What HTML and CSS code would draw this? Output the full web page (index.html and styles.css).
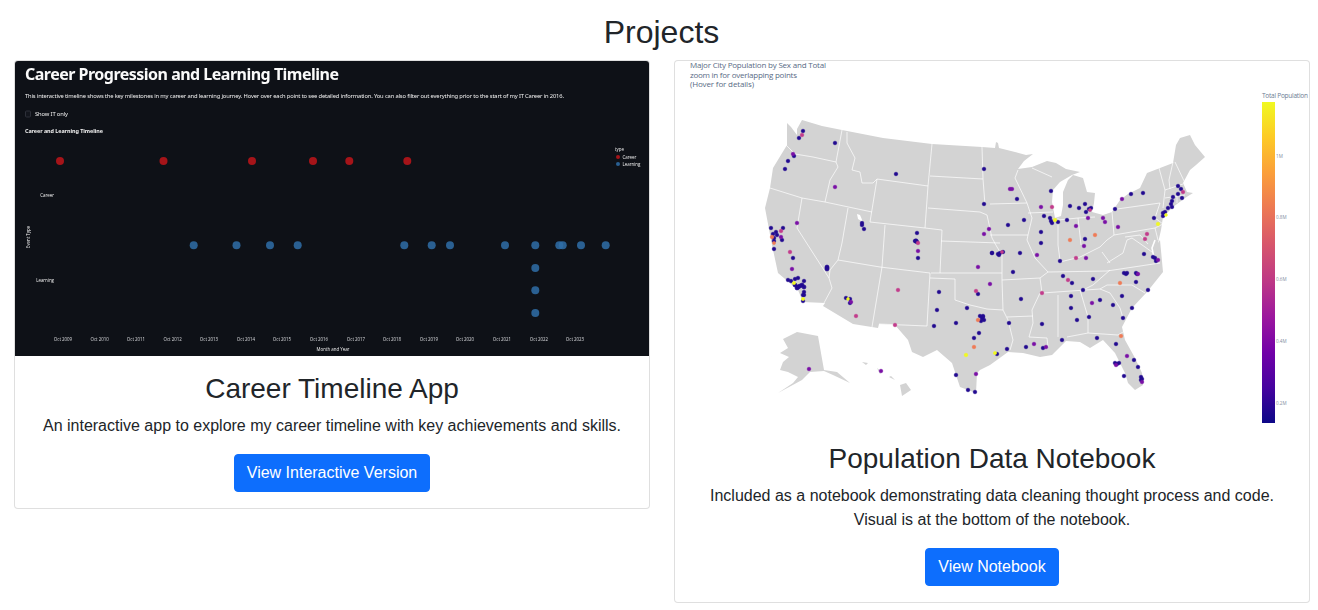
FILE: index.html
```html
<!DOCTYPE html>
<html lang="en">
<head>
    <meta charset="UTF-8">
    <meta name="viewport" content="width=device-width, initial-scale=1.0">
    <title>Projects</title>
    <link rel="stylesheet" href="styles.css">
</head>
<body>
<h1 class="page-title">Projects</h1>
<div class="project-grid">
    <div class="card">
        <svg class="card-img" width="634" height="295" viewBox="15 61 634 295" role="img" aria-label="Career timeline chart">
            <rect class="dark-bg" x="15" y="61" width="634" height="295"/>
            <g class="soft">
                <text class="st-title" x="25" y="79.5" textLength="314">Career Progression and Learning Timeline</text>
                <text class="st-text" x="25" y="97.5" textLength="539">This interactive timeline shows the key milestones in my career and learning journey. Hover over each point to see detailed information. You can also filter out everything prior to the start of my IT Career in 2016.</text>
                <rect class="st-check" x="25.5" y="111" width="5" height="6" rx="1"/>
                <text class="st-text" x="35" y="116" textLength="33">Show IT only</text>
                <text class="st-bold" x="25" y="133" textLength="78">Career and Learning Timeline</text>

                <text class="axis" x="54" y="196.5" text-anchor="end">Career</text>
                <text class="axis" x="54" y="281.5" text-anchor="end">Learning</text>
                <text class="axis" transform="translate(30 237) rotate(-90)" text-anchor="middle">Event Type</text>
                <text class="axis" x="333" y="351" text-anchor="middle">Month and Year</text>

                <g class="ticks">
                    <text x="63" y="340.5">Oct 2009</text>
                    <text x="99.7" y="340.5">Oct 2010</text>
                    <text x="136" y="340.5">Oct 2011</text>
                    <text x="172.7" y="340.5">Oct 2012</text>
                    <text x="209" y="340.5">Oct 2013</text>
                    <text x="246" y="340.5">Oct 2014</text>
                    <text x="282" y="340.5">Oct 2015</text>
                    <text x="319" y="340.5">Oct 2016</text>
                    <text x="356" y="340.5">Oct 2017</text>
                    <text x="392" y="340.5">Oct 2018</text>
                    <text x="429" y="340.5">Oct 2019</text>
                    <text x="465" y="340.5">Oct 2020</text>
                    <text x="502" y="340.5">Oct 2021</text>
                    <text x="539" y="340.5">Oct 2022</text>
                    <text x="575" y="340.5">Oct 2023</text>
                </g>

                <g class="pt-career">
                    <circle cx="60" cy="161" r="4"/><circle cx="163.5" cy="161" r="4"/><circle cx="252" cy="161" r="4"/>
                    <circle cx="313" cy="161" r="4"/><circle cx="349.3" cy="161" r="4"/><circle cx="407.3" cy="161" r="4"/>
                    <circle cx="618" cy="157" r="2"/>
                </g>
                <g class="pt-learning">
                    <circle cx="193.7" cy="245.3" r="4"/><circle cx="236.5" cy="245.3" r="4"/><circle cx="270" cy="245.3" r="4"/>
                    <circle cx="297.7" cy="245.3" r="4"/><circle cx="404.3" cy="245.3" r="4"/><circle cx="431.7" cy="245.3" r="4"/>
                    <circle cx="450" cy="245.3" r="4"/><circle cx="505" cy="245.3" r="4"/><circle cx="535.3" cy="245.3" r="4"/>
                    <circle cx="559.3" cy="245.3" r="4"/><circle cx="562.7" cy="245.3" r="4"/><circle cx="581" cy="245.3" r="4"/>
                    <circle cx="605.7" cy="245.3" r="4"/><circle cx="535.3" cy="268" r="4"/><circle cx="535.3" cy="290.3" r="4"/>
                    <circle cx="535.3" cy="313" r="4"/><circle cx="618" cy="164" r="2"/>
                </g>
                <text class="axis" x="615" y="151">type</text>
                <text class="axis" x="622.5" y="158.7">Career</text>
                <text class="axis" x="622.5" y="165.7">Learning</text>
            </g>
        </svg>
        <div class="card-body">
            <h2 class="card-title">Career Timeline App</h2>
            <p class="card-text">An interactive app to explore my career timeline with key achievements and skills.</p>
            <a class="btn" href="#">View Interactive Version</a>
        </div>
    </div>

    <div class="card">
        <svg class="card-img" width="634" height="365" viewBox="675 61 634 365" role="img" aria-label="Map of US city populations">
            <defs>
                <linearGradient id="plasma" x1="0" y1="1" x2="0" y2="0">
                    <stop offset="0" stop-color="#0d0887"/>
                    <stop offset="0.11" stop-color="#46039f"/>
                    <stop offset="0.22" stop-color="#7201a8"/>
                    <stop offset="0.33" stop-color="#9c179e"/>
                    <stop offset="0.44" stop-color="#bd3786"/>
                    <stop offset="0.56" stop-color="#d8576b"/>
                    <stop offset="0.67" stop-color="#ed7953"/>
                    <stop offset="0.78" stop-color="#fb9f3a"/>
                    <stop offset="0.89" stop-color="#fdca26"/>
                    <stop offset="1" stop-color="#f0f921"/>
                </linearGradient>
            </defs>

            <g class="map-title">
                <text x="690" y="68" textLength="136">Major City Population by Sex and Total</text>
                <text x="690" y="77.5" textLength="107">zoom in for overlapping points</text>
                <text x="690" y="86.5" textLength="64">(Hover for details)</text>
            </g>

            <g class="soft">
            <!-- land -->
            <path class="land" d="M787 123 L791 127 L797 135 L797 129 L802 120 L822 126 L842 130 L883 138 L932 144 L982 147 L995 148 L996 142 L998 143 L999 148 L1015 152 L1026 155 L1033 154 L1024 161 L1018 169 L1032 167 L1047 161 L1056 163 L1066 169 L1080 172 L1072 175 L1060 182 L1053 190 L1052 202 L1055 218 L1061 216 L1063 205 L1063 192 L1068 180 L1073 175 L1083 178 L1087 192 L1095 193 L1094 203 L1092 212 L1103 215 L1112 212 L1120 200 L1128 194 L1140 188 L1147 173 L1160 168 L1173 163 L1176 145 L1180 138 L1190 135 L1195 145 L1205 157 L1196 165 L1190 170 L1183 183 L1187 192 L1193 193 L1185 198 L1173 207 L1163 217 L1161 230 L1158 243 L1160 240 L1163 272 L1147 292 L1132 308 L1122 327 L1125 340 L1135 358 L1142 373 L1143 385 L1135 390 L1128 383 L1125 373 L1115 353 L1103 340 L1090 348 L1080 342 L1066 341 L1052 355 L1040 357 L1023 353 L1008 352 L990 365 L980 370 L977 373 L976 393 L960 387 L952 363 L937 350 L923 357 L912 352 L908 340 L895 325 L879 324 L878 328 L853 324 L823 306 L825 303 L803 302 L798 290 L778 273 L772 245 L765 208 L770 188 L773 168 L787 145 Z"/>
            <path class="land" d="M783 339 L797 332 L818 336 L824 370 L837 372 L850 383 L833 375 L824 371 L810 372 L802 380 L778 393 L793 383 L798 377 L788 372 L780 370 L783 362 L789 357 L780 353 L788 348 Z"/>
            <path class="land" d="M900 385 L906 383 L911 390 L902 396 Z M889 377 L895 380 L891 376 Z M882 372 L877 368 L880 374 Z M862 362 L866 365 L868 363 Z M772 357 L776 359 L770 356 Z"/>
            <path class="salt-lake" d="M857 214 L860 215 L863 222 L858 219 Z"/>

            <!-- state lines -->
            <path class="states" d="M786 145 L795 154 L813 157 L836 162 M842 130 L836 162 L838 167 L830 180 L825 202 M770 188 L802 198 L825 202 L872 212 M802 198 L797 228 L829 278 L832 288 L824 303 M848 208 L842 243 L838 260 L880 267 L930 273 M838 260 L830 270 L829 278 M877 179 L928 186 L925 228 L870 222 L877 179 M885 225 L882 267 L872 327 M847 132 L847 143 L855 158 L852 170 L860 172 L862 183 L873 183 L877 179 M932 144 L928 186 M930 176 L983 179 M982 147 L983 179 L985 205 M928 208 L980 212 L987 215 M925 228 L942 230 L940 273 M941 241 L1000 243 M931 273 L1002 273 M930 273 L927 326 L879 324 M930 278 L955 279 L955 300 L970 305 L987 309 L1003 310 M987 215 L992 238 L997 247 L1002 255 L1002 280 L1040 278 M1002 280 L1003 310 L1008 320 L1013 340 L1010 350 M1007 317 L1033 316 M1040 293 L1032 310 L1033 323 L1029 337 L1047 338 L1048 347 M1058 295 L1058 337 M1042 293 L1100 289 M1048 272 L1107 271 L1160 263 M1080 290 L1088 317 L1088 333 M1067 337 L1088 333 L1118 335 L1123 332 M1100 289 L1110 293 L1120 308 L1123 318 M1100 289 L1107 285 L1132 285 L1145 293 M1110 270 L1093 285 L1083 290 M1027 240 L1035 258 L1048 272 L1040 278 L1042 293 M1058 218 L1058 245 L1060 260 M1060 262 L1080 257 L1100 247 L1107 240 M1102 252 L1110 263 M1107 263 L1123 253 L1127 240 L1132 238 L1145 247 L1152 252 M1018 170 L1015 178 L1027 203 M990 204 L1027 203 L1032 218 L1028 235 L1027 240 M990 235 L1028 235 M1028 213 L1053 212 M1058 220 L1078 218 L1095 217 M1078 218 L1081 245 M1032 168 L1052 177 M1112 212 L1114 235 L1107 240 M1117 209 L1160 203 M1114 235 L1155 228 M1160 203 L1155 218 L1163 224 L1155 228 L1158 240 M1159 168 L1165 190 L1163 208 M1173 162 L1169 180 L1170 189 M1175 162 L1185 183 M1165 190 L1183 184 M1165 198 L1185 195 M1177 195 L1177 203 M1125 237 L1140 235 L1148 244"/>
            <path class="bay" d="M1155 240 L1152 248 L1154 258"/>

            <!-- cities -->
            <g class="dot-navy">
                <circle cx="803" cy="131" r="1.8"/><circle cx="799" cy="138" r="1.8"/><circle cx="835" cy="143" r="1.8"/><circle cx="794" cy="156" r="1.8"/><circle cx="788" cy="161" r="1.8"/><circle cx="785" cy="169" r="1.8"/><circle cx="896" cy="174" r="1.8"/><circle cx="984" cy="169" r="1.8"/><circle cx="984" cy="204" r="1.8"/><circle cx="862" cy="223" r="1.8"/><circle cx="862" cy="225" r="1.8"/><circle cx="864" cy="229" r="1.8"/><circle cx="917" cy="233" r="1.8"/><circle cx="916" cy="241" r="2.2"/><circle cx="917" cy="242" r="1.8"/><circle cx="915" cy="241" r="1.8"/>
                <circle cx="771" cy="228" r="1.8"/><circle cx="776" cy="232" r="1.8"/><circle cx="773" cy="234" r="1.8"/><circle cx="774" cy="238" r="1.8"/><circle cx="774" cy="241" r="1.8"/><circle cx="777" cy="235" r="1.8"/><circle cx="783" cy="228" r="1.8"/><circle cx="782" cy="240" r="1.8"/><circle cx="774" cy="249" r="1.8"/><circle cx="793" cy="258" r="1.8"/><circle cx="798" cy="278" r="1.8"/><circle cx="788" cy="280" r="1.8"/><circle cx="791" cy="281" r="1.8"/><circle cx="795" cy="279" r="1.8"/><circle cx="804" cy="281" r="1.8"/>
                <circle cx="795" cy="285" r="2"/><circle cx="798" cy="287" r="2.2"/><circle cx="802" cy="285" r="2"/><circle cx="804" cy="287" r="2"/><circle cx="797" cy="288" r="2"/><circle cx="800" cy="286" r="2"/><circle cx="804" cy="292" r="1.8"/><circle cx="803" cy="295" r="1.8"/><circle cx="804" cy="295" r="1.8"/><circle cx="803" cy="301" r="1.8"/><circle cx="827" cy="267" r="2"/><circle cx="827" cy="268" r="2"/><circle cx="827" cy="269" r="2"/><circle cx="846" cy="298" r="1.8"/><circle cx="850" cy="299" r="1.8"/><circle cx="850" cy="303" r="1.8"/>
                <circle cx="918" cy="258" r="1.8"/><circle cx="992" cy="253" r="1.8"/><circle cx="998" cy="254" r="1.8"/><circle cx="978" cy="294" r="1.8"/><circle cx="939" cy="292" r="1.8"/><circle cx="937" cy="310" r="1.8"/><circle cx="967" cy="308" r="1.8"/><circle cx="934" cy="326" r="1.8"/><circle cx="956" cy="323" r="1.8"/><circle cx="980" cy="316" r="1.8"/><circle cx="983" cy="316" r="1.8"/><circle cx="982" cy="318" r="1.8"/><circle cx="984" cy="320" r="1.8"/><circle cx="981" cy="321" r="1.8"/><circle cx="983" cy="317" r="1.8"/><circle cx="979" cy="333" r="1.8"/><circle cx="974" cy="338" r="1.8"/><circle cx="997" cy="354" r="1.8"/><circle cx="956" cy="375" r="1.8"/><circle cx="968" cy="390" r="1.8"/><circle cx="975" cy="392" r="1.8"/>
                <circle cx="1017" cy="199" r="1.8"/><circle cx="1051" cy="191" r="1.8"/><circle cx="1070" cy="206" r="1.8"/><circle cx="1079" cy="208" r="1.8"/><circle cx="1085" cy="204" r="1.8"/><circle cx="1091" cy="208" r="1.8"/><circle cx="1089" cy="209" r="1.8"/><circle cx="1086" cy="212" r="1.8"/><circle cx="1115" cy="209" r="1.8"/><circle cx="1131" cy="194" r="1.8"/><circle cx="1143" cy="193" r="1.8"/><circle cx="1178" cy="186" r="1.8"/><circle cx="1181" cy="189" r="1.8"/><circle cx="1182" cy="198" r="1.8"/><circle cx="1178" cy="194" r="1.8"/><circle cx="1173" cy="197" r="1.8"/><circle cx="1172" cy="201" r="1.8"/><circle cx="1171" cy="204" r="1.8"/><circle cx="1172" cy="207" r="1.8"/><circle cx="1168" cy="208" r="1.8"/><circle cx="1165" cy="212" r="1.8"/><circle cx="1163" cy="213" r="1.8"/><circle cx="1163" cy="216" r="1.8"/><circle cx="1154" cy="218" r="1.8"/>
                <circle cx="1085" cy="239" r="1.8"/><circle cx="1067" cy="220" r="1.8"/><circle cx="1058" cy="222" r="1.8"/><circle cx="1050" cy="218" r="1.8"/><circle cx="1051" cy="221" r="1.8"/><circle cx="1052" cy="223" r="1.8"/><circle cx="1044" cy="216" r="1.8"/><circle cx="1041" cy="232" r="1.8"/><circle cx="1041" cy="243" r="1.8"/><circle cx="1024" cy="220" r="1.8"/><circle cx="1008" cy="225" r="1.8"/>
                <circle cx="992" cy="253" r="1.8"/><circle cx="1000" cy="253" r="1.8"/><circle cx="1003" cy="252" r="1.8"/><circle cx="999" cy="255" r="1.8"/><circle cx="1020" cy="253" r="1.8"/><circle cx="1060" cy="261" r="1.8"/><circle cx="1144" cy="254" r="1.8"/><circle cx="1153" cy="257" r="1.8"/><circle cx="1155" cy="258" r="1.8"/><circle cx="1156" cy="261" r="1.8"/><circle cx="1013" cy="272" r="1.8"/><circle cx="1021" cy="299" r="1.8"/><circle cx="1063" cy="276" r="1.8"/><circle cx="1072" cy="283" r="1.8"/><circle cx="1093" cy="279" r="1.8"/><circle cx="1083" cy="290" r="1.8"/><circle cx="1071" cy="296" r="1.8"/><circle cx="1071" cy="308" r="1.8"/><circle cx="1077" cy="320" r="1.8"/><circle cx="1100" cy="300" r="1.8"/><circle cx="1089" cy="317" r="1.8"/><circle cx="1113" cy="305" r="1.8"/><circle cx="1122" cy="296" r="1.8"/><circle cx="1124" cy="273" r="1.8"/><circle cx="1126" cy="274" r="1.8"/><circle cx="1127" cy="273" r="1.8"/><circle cx="1136" cy="273" r="1.8"/><circle cx="1137" cy="274" r="1.8"/><circle cx="1136" cy="282" r="1.8"/><circle cx="1148" cy="290" r="1.8"/><circle cx="1132" cy="308" r="1.8"/><circle cx="1123" cy="318" r="1.8"/><circle cx="1097" cy="338" r="1.8"/><circle cx="1116" cy="344" r="1.8"/><circle cx="1062" cy="340" r="1.8"/><circle cx="1042" cy="324" r="1.8"/><circle cx="1009" cy="323" r="1.8"/><circle cx="1007" cy="349" r="1.8"/><circle cx="1026" cy="347" r="1.8"/><circle cx="1043" cy="348" r="1.8"/><circle cx="1134" cy="360" r="1.8"/><circle cx="1138" cy="367" r="1.8"/><circle cx="1115" cy="363" r="1.8"/><circle cx="1117" cy="364" r="1.8"/><circle cx="1119" cy="363" r="1.8"/><circle cx="1124" cy="376" r="1.8"/><circle cx="1141" cy="377" r="1.8"/><circle cx="1142" cy="379" r="1.8"/><circle cx="1141" cy="380" r="1.8"/>
            </g>
            <g class="dot-purple">
                <circle cx="793" cy="154" r="1.8"/><circle cx="835" cy="187" r="1.8"/><circle cx="989" cy="229" r="1.8"/><circle cx="984" cy="234" r="1.8"/><circle cx="797" cy="223" r="1.8"/><circle cx="781" cy="237" r="1.8"/><circle cx="792" cy="269" r="1.8"/><circle cx="851" cy="302" r="1.8"/><circle cx="918" cy="251" r="1.8"/><circle cx="978" cy="267" r="1.8"/><circle cx="990" cy="284" r="1.8"/><circle cx="976" cy="374" r="1.8"/><circle cx="809" cy="369" r="1.8"/><circle cx="881" cy="371" r="1.8"/><circle cx="1010" cy="189" r="1.8"/><circle cx="1012" cy="189" r="1.8"/><circle cx="1041" cy="207" r="1.8"/><circle cx="1122" cy="199" r="1.8"/><circle cx="1118" cy="227" r="1.8"/><circle cx="1105" cy="222" r="1.8"/><circle cx="1103" cy="218" r="1.8"/><circle cx="1088" cy="218" r="1.8"/><circle cx="1076" cy="226" r="1.8"/><circle cx="1037" cy="255" r="1.8"/><circle cx="1086" cy="258" r="1.8"/><circle cx="1084" cy="246" r="1.8"/><circle cx="1138" cy="274" r="1.8"/><circle cx="1092" cy="303" r="1.8"/><circle cx="1034" cy="344" r="1.8"/><circle cx="1046" cy="347" r="1.8"/><circle cx="1127" cy="356" r="1.8"/><circle cx="1116" cy="365" r="1.8"/><circle cx="1142" cy="382" r="1.8"/><circle cx="1158" cy="260" r="1.8"/>
            </g>
            <g class="dot-magenta">
                <circle cx="802" cy="135" r="1.8"/><circle cx="918" cy="243" r="1.8"/><circle cx="781" cy="231" r="1.8"/><circle cx="790" cy="252" r="1.8"/><circle cx="856" cy="316" r="1.8"/><circle cx="898" cy="290" r="1.8"/><circle cx="895" cy="325" r="1.8"/><circle cx="976" cy="291" r="1.8"/><circle cx="1052" cy="207" r="1.8"/><circle cx="1090" cy="210" r="1.5"/><circle cx="1183" cy="192" r="1.8"/><circle cx="1147" cy="234" r="1.8"/><circle cx="1145" cy="239" r="1.8"/><circle cx="1002" cy="252" r="1.5"/><circle cx="1076" cy="258" r="1.8"/><circle cx="1042" cy="293" r="1.8"/><circle cx="1068" cy="280" r="1.8"/>
            </g>
            <g class="dot-orange">
                <circle cx="772" cy="237" r="1.8"/><circle cx="774" cy="243" r="1.5"/><circle cx="978" cy="320" r="1.8"/><circle cx="974" cy="347" r="1.8"/><circle cx="1095" cy="235" r="1.8"/><circle cx="1070" cy="240" r="1.8"/><circle cx="1120" cy="283" r="1.8"/><circle cx="1121" cy="336" r="1.8"/>
            </g>
            <g class="dot-yellow">
                <circle cx="794" cy="283" r="1.6"/><circle cx="803" cy="299" r="1.6"/><circle cx="848" cy="299" r="1.4"/><circle cx="966" cy="355" r="1.8"/><circle cx="995" cy="353" r="1.6"/><circle cx="1166" cy="215" r="1.4"/><circle cx="1158" cy="224" r="1.8"/><circle cx="1055" cy="220" r="1.8"/>
            </g>
            </g>

            <!-- colour bar -->
            <text class="bar-title" x="1262" y="98" textLength="46">Total Population</text>
            <rect x="1262" y="102" width="13" height="321" fill="url(#plasma)"/>
            <g class="bar-ticks">
                <text x="1276" y="157.5">1M</text>
                <text x="1276" y="219">0.8M</text>
                <text x="1276" y="281">0.6M</text>
                <text x="1276" y="343">0.4M</text>
                <text x="1276" y="404.5">0.2M</text>
            </g>
        </svg>
        <div class="card-body">
            <h2 class="card-title">Population Data Notebook</h2>
            <p class="card-text">Included as a notebook demonstrating data cleaning thought process and code. Visual is at the bottom of the notebook.</p>
            <a class="btn" href="#">View Notebook</a>
        </div>
    </div>
</div>
</body>
</html>
```

FILE: styles.css
```css
body {
    margin: 0;
    font-family: "Liberation Sans", Arial, sans-serif;
    font-size: 16px;
    line-height: 1.5;
    color: #212529;
    background-color: #ffffff;
}

.page-title {
    margin: 0;
    padding: 13px 0 8.6px 5px;
    font-size: 32px;
    font-weight: 400;
    line-height: 1.2;
    text-align: center;
}

.project-grid {
    display: grid;
    grid-template-columns: 636px 636px;
    gap: 24px;
    align-items: start;
    padding: 0 8px 0 14px;
}

.card {
    border: 1px solid rgba(0, 0, 0, 0.125);
    border-radius: 4px;
    background-color: #ffffff;
}

.card-img {
    display: block;
    border-radius: 3px 3px 0 0;
}

.card-body {
    padding: 16px;
    text-align: center;
}

.card-title {
    margin: 0 0 8px;
    font-size: 28px;
    font-weight: 400;
    line-height: 1.2;
}

.card-text {
    margin: 0 0 16px;
}

.btn {
    display: inline-block;
    padding: 6px 12px;
    border: 1px solid #0d6efd;
    border-radius: 4px;
    background-color: #0d6efd;
    color: #ffffff;
    text-decoration: none;
}

/* timeline picture */
.dark-bg {
    fill: #0e1117;
}

.soft {
    filter: blur(0.3px);
}

.st-title {
    font-family: "Noto Sans", sans-serif;
    font-size: 16px;
    font-weight: 700;
    fill: #fafafa;
}

.st-text {
    font-family: "Noto Sans", sans-serif;
    font-size: 5.8px;
    fill: #f0f0f0;
}

.st-bold {
    font-family: "Noto Sans", sans-serif;
    font-size: 5.4px;
    font-weight: 700;
    fill: #f0f0f0;
}

.st-check {
    fill: #13161d;
    stroke: #3b3e47;
    stroke-width: 0.7;
}

.axis,
.ticks text {
    font-family: "Open Sans", sans-serif;
    font-size: 4.4px;
    fill: #f0f0f0;
}

.ticks text {
    text-anchor: middle;
    fill: #dcdde0;
}

.pt-career {
    fill: #a51419;
}

.pt-learning {
    fill: #2f6fa8;
    fill-opacity: 0.85;
}

/* map picture */
.map-title text {
    font-family: "Open Sans", sans-serif;
    font-size: 8px;
    fill: #596b85;
}

.land {
    fill: #d3d3d3;
}

.salt-lake {
    fill: #ffffff;
}

.states {
    fill: none;
    stroke: #ffffff;
    stroke-width: 0.7;
    stroke-linejoin: round;
}

.bay {
    fill: none;
    stroke: #ffffff;
    stroke-width: 1.6;
}

.dot-navy {
    fill: #220a90;
    stroke: #220a90;
    stroke-width: 0.6;
}

.dot-purple {
    fill: #7a10a6;
    stroke: #7a10a6;
    stroke-width: 0.6;
}

.dot-magenta {
    fill: #c23c8c;
    stroke: #c23c8c;
    stroke-width: 0.6;
}

.dot-orange {
    fill: #ef7b56;
    stroke: #ef7b56;
    stroke-width: 0.6;
}

.dot-yellow {
    fill: #f0f921;
    stroke: #f0f921;
    stroke-width: 0.6;
}

.bar-title {
    font-family: "Open Sans", sans-serif;
    font-size: 6.5px;
    fill: #6b7c93;
}

.bar-ticks text {
    font-family: "Open Sans", sans-serif;
    font-size: 4.6px;
    fill: #7f8ca0;
}
```
